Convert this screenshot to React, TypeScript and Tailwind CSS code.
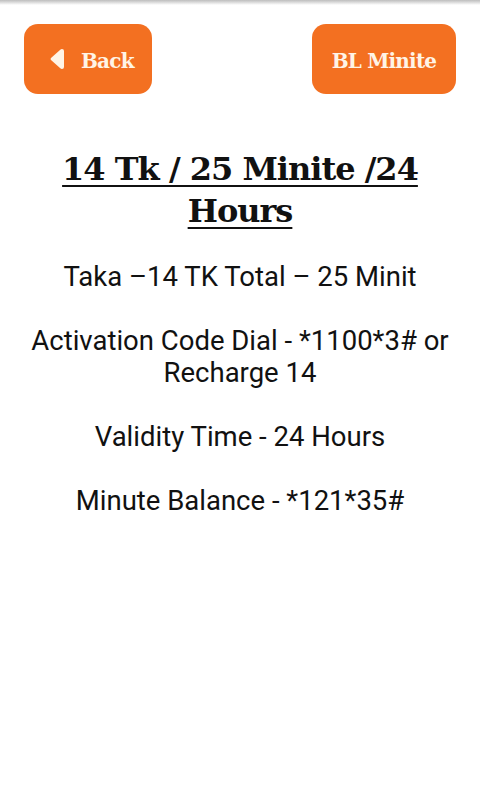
export default function App() {
  return (
    <div className="min-h-[800px] w-[480px] bg-white relative">
      <div className="absolute top-0 left-0 right-0 h-[5px] bg-gradient-to-b from-[#bdbdbd] to-white" />
      <div className="flex justify-between px-6 pt-6">
        <button className="flex items-center gap-[17px] h-[70px] w-[128px] rounded-[14px] bg-[#f37021] pl-[26px] pt-[3px] text-[#fff4e6] text-[20px] font-bold font-['DejaVu_Serif',serif]">
          <svg width="14" height="22" viewBox="0 0 14 22" className="-mt-[3px]">
            <path d="M12 1 Q14 1 14 3 L14 19 Q14 21 12 21 Q11 21 10 20 L1 12 Q0 11 1 10 L10 2 Q11 1 12 1Z" fill="#fff4e6" />
          </svg>
          <span className="tracking-[-0.8px]">Back</span>
        </button>
        <button className="flex items-center justify-center h-[70px] w-[144px] rounded-[14px] bg-[#f37021] pt-[3px] text-[#fff4e6] text-[20px] font-bold font-['DejaVu_Serif',serif] tracking-[-0.8px]">
          BL Minite
        </button>
      </div>
      <h1 className="mt-[54px] px-8 text-center text-[32px] leading-[42px] font-bold underline underline-offset-[5px] decoration-2 text-[#111] font-['DejaVu_Serif',serif] tracking-[-1px]">
        14 Tk / 25 Minite /24 Hours
      </h1>
      <div className="mt-[29px] flex flex-col gap-8 px-2 text-center text-[27.5px] leading-[32px] text-[#111] font-['Roboto',sans-serif]">
        <p>Taka –14 TK Total – 25 Minit</p>
        <p>Activation Code Dial - *1100*3# or<br />Recharge 14</p>
        <p>Validity Time - 24 Hours</p>
        <p>Minute Balance - *121*35#</p>
      </div>
    </div>
  );
}
